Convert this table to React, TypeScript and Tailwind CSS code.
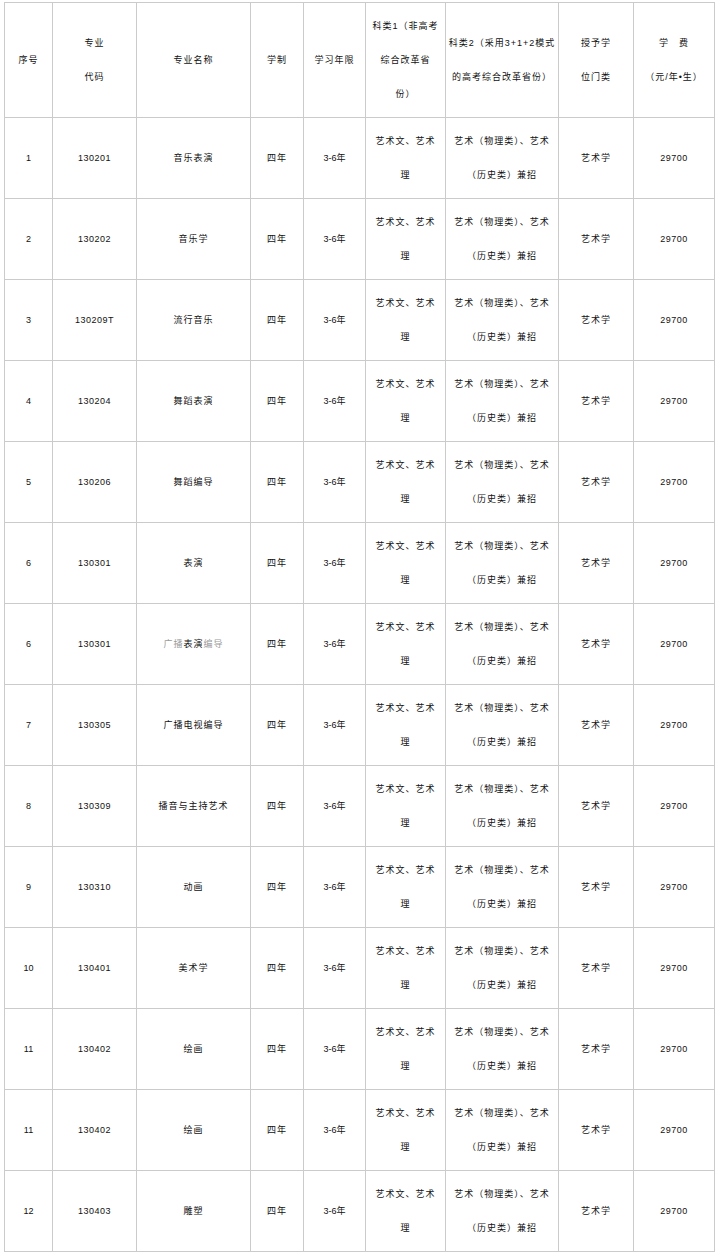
import React from 'react';

type Row = {
  no: string;
  code: string;
  name: React.ReactNode;
};

const rows: Row[] = [
  { no: '1', code: '130201', name: '音乐表演' },
  { no: '2', code: '130202', name: '音乐学' },
  { no: '3', code: '130209T', name: '流行音乐' },
  { no: '4', code: '130204', name: '舞蹈表演' },
  { no: '5', code: '130206', name: '舞蹈编导' },
  { no: '6', code: '130301', name: '表演' },
  {
    no: '6',
    code: '130301',
    // overlapped text as in the source picture
    name: (
      <>
        <span className="text-[#9a9a9a]">广播</span>
        表演
        <span className="text-[#9a9a9a]">编导</span>
      </>
    ),
  },
  { no: '7', code: '130305', name: '广播电视编导' },
  { no: '8', code: '130309', name: '播音与主持艺术' },
  { no: '9', code: '130310', name: '动画' },
  { no: '10', code: '130401', name: '美术学' },
  { no: '11', code: '130402', name: '绘画' },
  { no: '11', code: '130402', name: '绘画' },
  { no: '12', code: '130403', name: '雕塑' },
];

const cell = 'border border-[#cbcbcb] text-center align-middle p-0 leading-[34px]';
const cjk = 'tracking-[1px]';

export default function App() {
  return (
    <div
      className="bg-white w-[716px] h-[1253px] pt-[2px] pl-[4px] text-[#111] text-[9px]"
      style={{ fontFamily: '"Liberation Sans", "Noto Sans CJK SC", sans-serif' }}
    >
      <table className="table-fixed border-collapse w-[710px]">
        <colgroup>
          <col className="w-[48px]" />
          <col className="w-[84px]" />
          <col className="w-[114px]" />
          <col className="w-[53px]" />
          <col className="w-[62px]" />
          <col className="w-[80px]" />
          <col className="w-[113px]" />
          <col className="w-[75px]" />
          <col className="w-[81px]" />
        </colgroup>
        <thead>
          <tr className="h-[115px]">
            <th className={`${cell} ${cjk} font-normal`}>序号</th>
            <th className={`${cell} ${cjk} font-normal`}>
              专业<br />代码
            </th>
            <th className={`${cell} ${cjk} font-normal`}>专业名称</th>
            <th className={`${cell} ${cjk} font-normal`}>学制</th>
            <th className={`${cell} ${cjk} font-normal`}>学习年限</th>
            <th className={`${cell} ${cjk} font-normal`}>
              科类1（非高考<br />综合改革省<br />份）
            </th>
            <th className={`${cell} ${cjk} font-normal`}>
              科类2（采用3+1+2模式<br />的高考综合改革省份）
            </th>
            <th className={`${cell} ${cjk} font-normal`}>
              授予学<br />位门类
            </th>
            <th className={`${cell} ${cjk} font-normal`}>
              学　费<br />（元/年•生）
            </th>
          </tr>
        </thead>
        <tbody>
          {rows.map((r, i) => (
            <tr key={i} className="h-[81px]">
              <td className={cell}>{r.no}</td>
              <td className={`${cell} tracking-[0.5px]`}>{r.code}</td>
              <td className={`${cell} ${cjk}`}>{r.name}</td>
              <td className={`${cell} ${cjk}`}>四年</td>
              <td className={cell}>3-6年</td>
              <td className={`${cell} ${cjk}`}>
                艺术文、艺术<br />理
              </td>
              <td className={`${cell} ${cjk}`}>
                艺术（物理类）、艺术<br />（历史类）兼招
              </td>
              <td className={`${cell} ${cjk}`}>艺术学</td>
              <td className={`${cell} tracking-[0.5px]`}>29700</td>
            </tr>
          ))}
        </tbody>
      </table>
    </div>
  );
}
